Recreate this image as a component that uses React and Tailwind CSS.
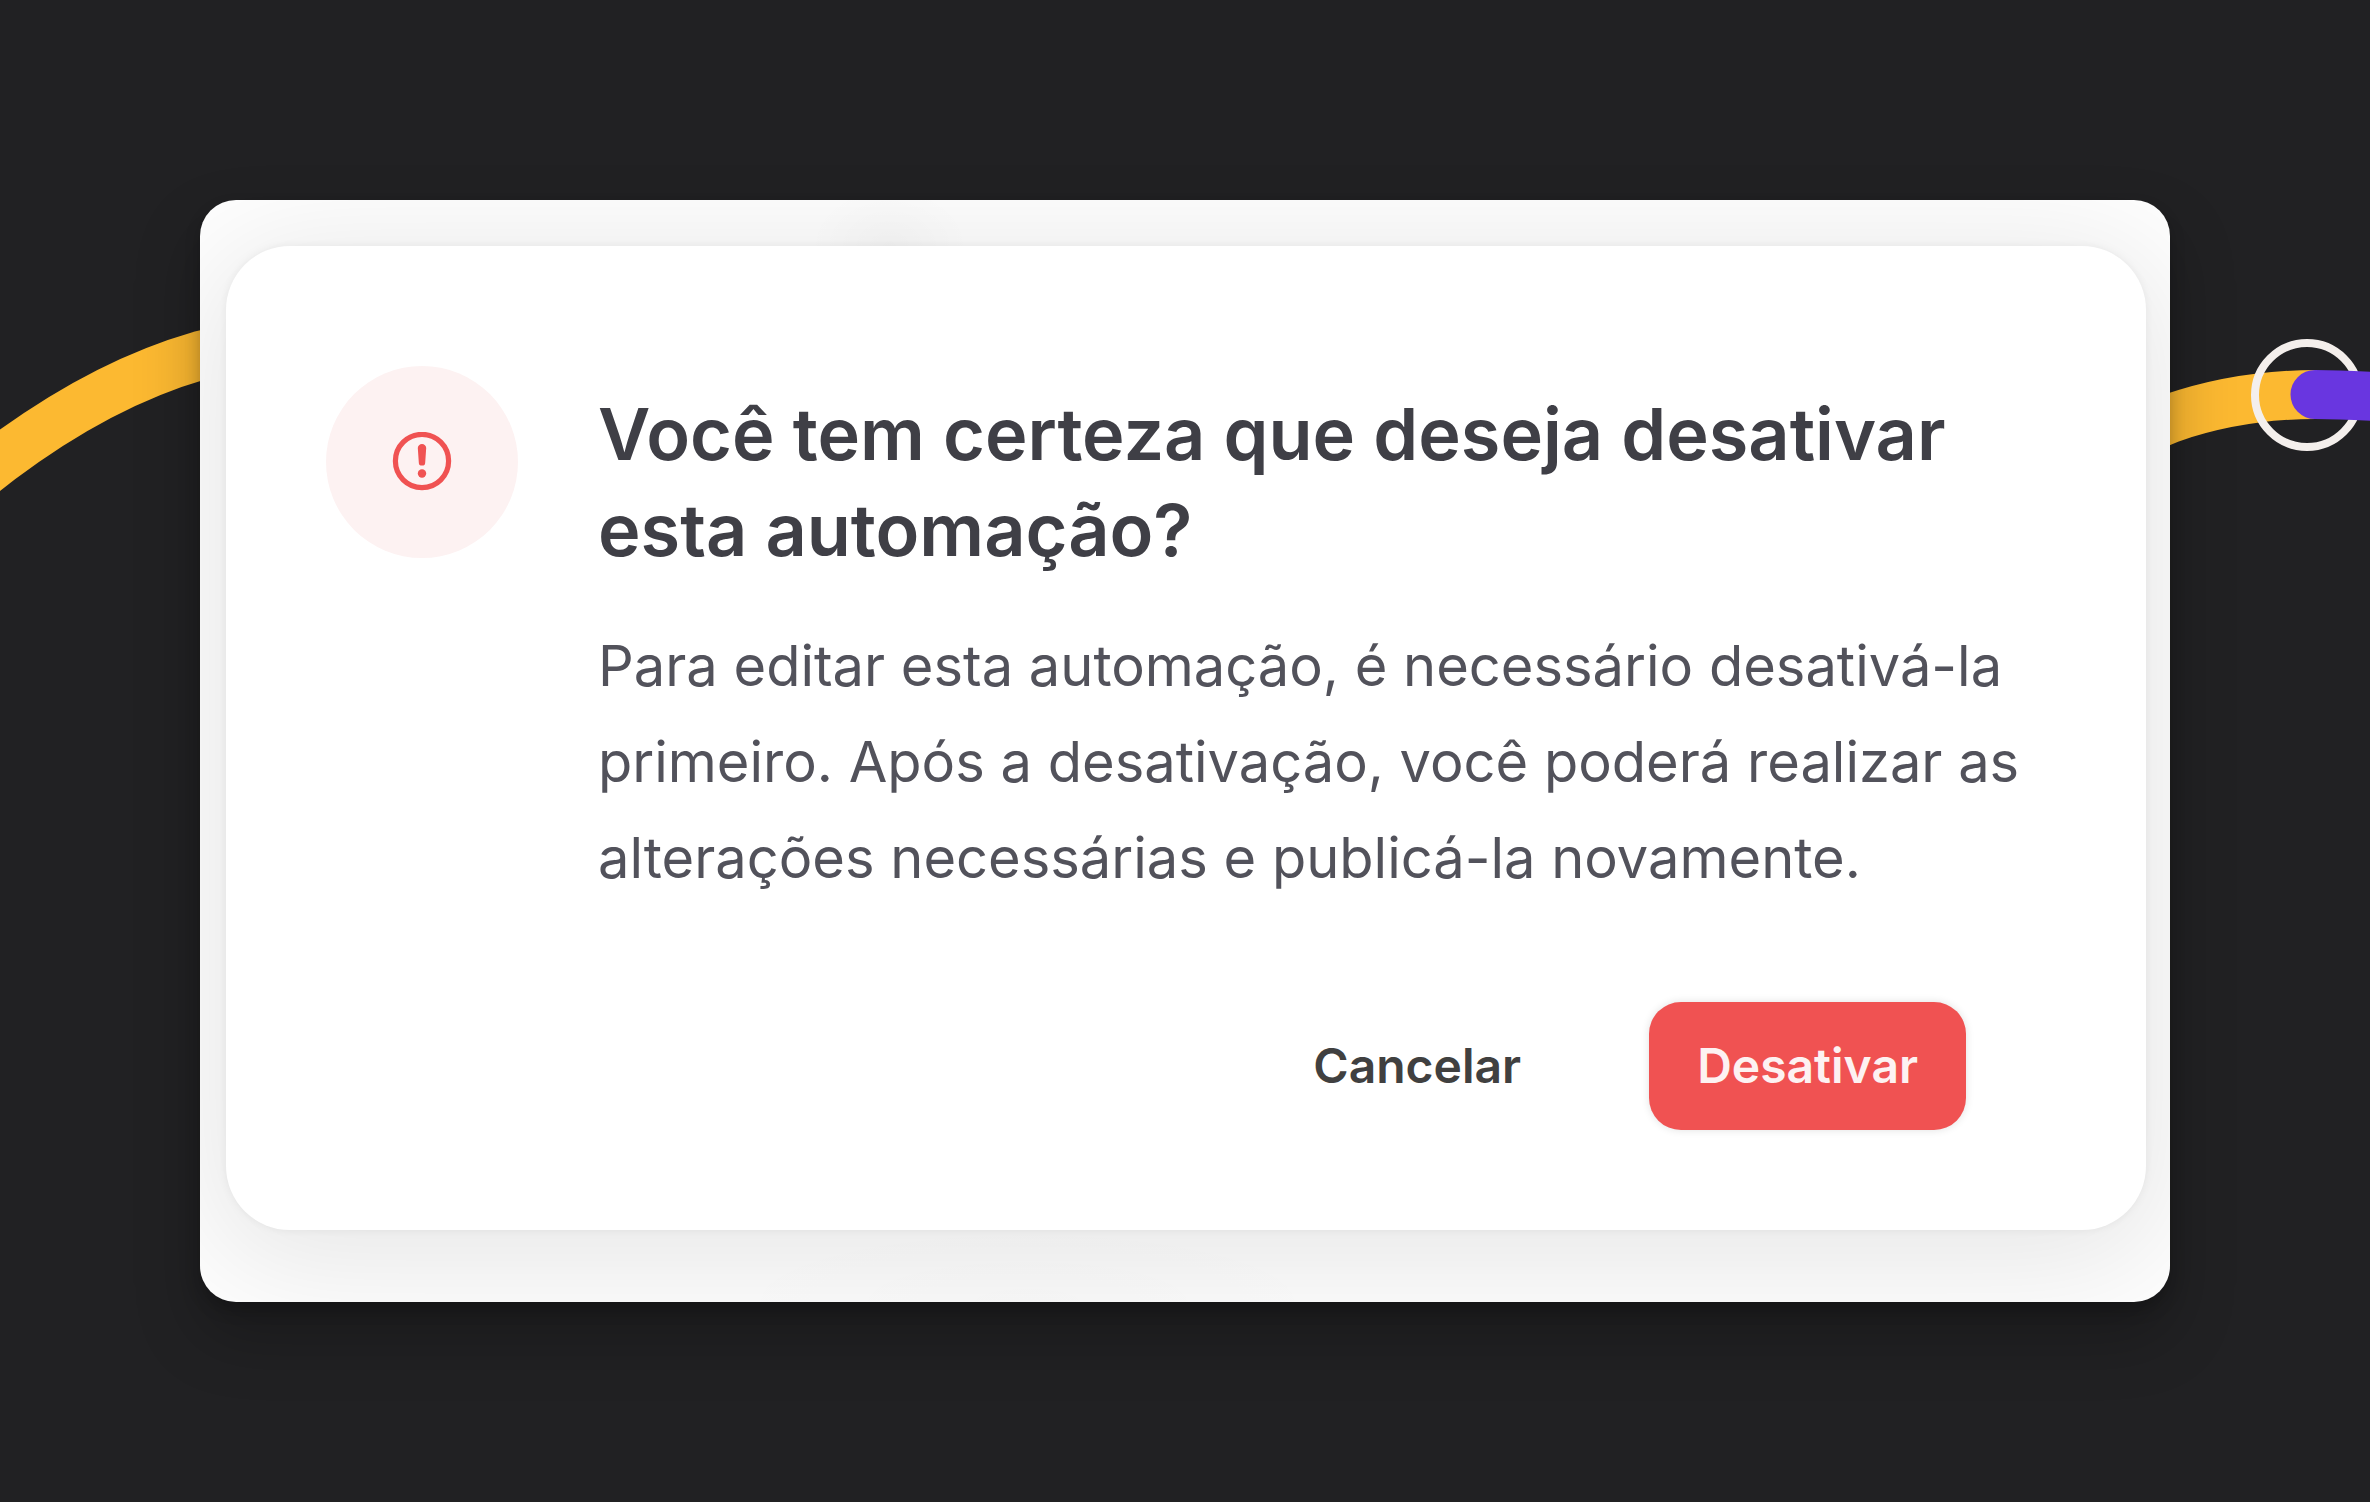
function AlertIcon() {
  return (
    <svg viewBox="0 0 60 60" className="size-[60px]" fill="none" aria-hidden="true">
      <circle cx="30" cy="29" r="26.6" stroke="#f05252" strokeWidth="5.2" />
      <path d="M25.8 16.1a4.2 4.2 0 0 1 8.4 0l-1 14.3a3.2 3.2 0 0 1-6.4 0z" fill="#f05252" />
      <circle cx="30" cy="41.5" r="4.2" fill="#f05252" />
    </svg>
  );
}

function Ribbons() {
  return (
    <div className="pointer-events-none absolute inset-x-0 top-[300px] flex justify-between" aria-hidden="true">
      <svg viewBox="0 0 260 220" className="h-[220px] w-[260px]" fill="none">
        <path d="M-20 175.5L0 160Q101 84 200 55.5L240 46" stroke="#fcb931" strokeWidth="49" />
      </svg>
      <svg viewBox="0 0 260 220" className="h-[220px] w-[260px]" fill="none">
        <path d="M20 135L60 118.5Q129 94.5 206 94.5" stroke="#fcb931" strokeWidth="49" />
        <circle cx="197" cy="95" r="52" stroke="#f4efec" strokeWidth="8" />
        <path d="M205 94.5Q236 94.5 290 98" stroke="#6936e0" strokeWidth="49" strokeLinecap="round" />
      </svg>
    </div>
  );
}

export default function App() {
  return (
    <main className="relative min-h-screen overflow-hidden bg-[#212123] p-[200px] font-['Inter',sans-serif]">
      <Ribbons />
      <div className="relative rounded-[36px] shadow-[0_8px_16px_rgba(0,0,0,0.2),0_32px_64px_rgba(0,0,0,0.25)]">
        <div className="overflow-hidden rounded-[36px] bg-[#fefefe] bg-[radial-gradient(80px_60px_at_35%_46px,rgba(0,0,0,0.025),transparent),radial-gradient(320px_80px_at_42%_100%,rgba(0,0,0,0.012),transparent)] pt-[46px] pr-6 pb-[72px] pl-[26px]">
          <section
            role="alertdialog"
            aria-labelledby="dialog-title"
            aria-describedby="dialog-text"
            className="rounded-[64px] bg-white p-[100px] pt-[120px] shadow-[0_0_6px_2px_rgba(0,0,0,0.04),0_20px_120px_20px_rgba(0,0,0,0.09)]"
          >
            <div className="flex items-start gap-20">
              <div className="flex size-48 shrink-0 items-center justify-center rounded-full bg-[#fdf2f2]">
                <AlertIcon />
              </div>
              <div className="min-w-0 flex-1 pt-5">
                <h1 id="dialog-title" className="text-[72px] leading-[96px] font-semibold text-[#3f3f46]">
                  Você tem certeza que deseja desativar esta automação?
                </h1>
                <p id="dialog-text" className="mt-10 text-[56px] leading-[96px] text-[#52525b]">
                  Para editar esta automação, é necessário desativá-la primeiro. Após a desativação, você poderá
                  realizar as alterações necessárias e publicá-la novamente.
                </p>
              </div>
            </div>
            <div className="mt-24 flex justify-end gap-20 pr-20 text-[48px] leading-[64px] font-semibold">
              <button type="button" className="rounded-[32px] px-12 py-8 text-[#404040]">
                Cancelar
              </button>
              <button
                type="button"
                className="rounded-[32px] bg-[#f05252] px-12 py-8 text-[#fdf2f2] shadow-[0_0_8px_rgba(0,0,0,0.12)]"
              >
                Desativar
              </button>
            </div>
          </section>
        </div>
      </div>
    </main>
  );
}
